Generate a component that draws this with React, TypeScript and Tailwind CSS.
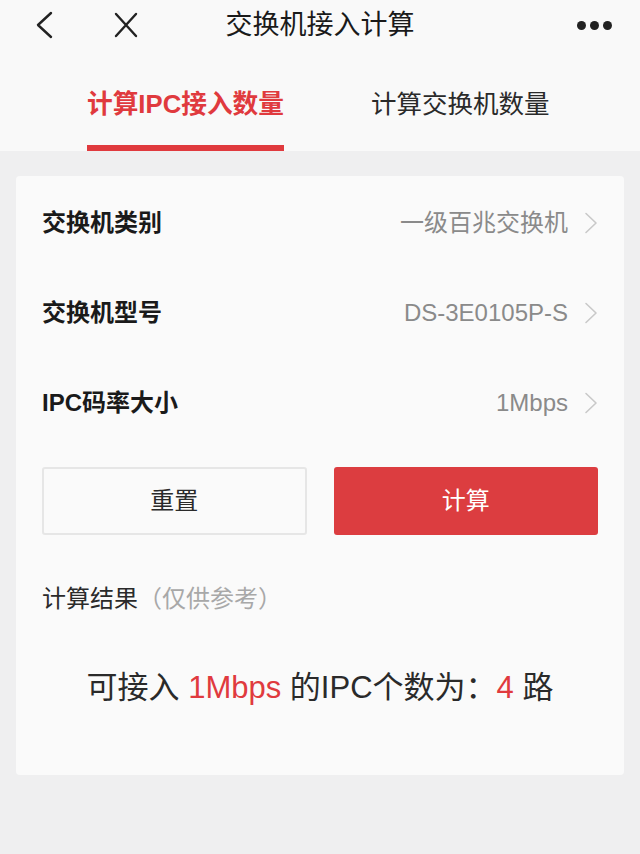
import React from "react";

const FONT = { fontFamily: '"Liberation Sans", "Noto Sans CJK SC", sans-serif' };

function Chevron() {
  return (
    <svg width="14" height="22" viewBox="0 0 14 22" className="ml-[16px] shrink-0">
      <path d="M2 1.5 L12 11 L2 20.5" fill="none" stroke="#c9c9c9" strokeWidth="1.6" strokeLinecap="round" strokeLinejoin="round" />
    </svg>
  );
}

function Row({ label, value }: { label: string; value: string }) {
  return (
    <div className="flex h-[90px] items-center justify-between">
      <div className="text-[24px] font-bold text-[#1a1a1a]">{label}</div>
      <div className="flex items-center">
        <span className="text-[24px] text-[#8a8a8a]">{value}</span>
        <Chevron />
      </div>
    </div>
  );
}

export default function App() {
  return (
    <div className="flex min-h-[854px] w-[640px] flex-col bg-[#efeff0]" style={FONT}>
      <div className="bg-[#f9f9f9]">
        <div className="grid h-[50px] grid-cols-[1fr_auto_1fr] items-center">
          <div className="flex items-center pl-[34px]">
            <svg width="20" height="30" viewBox="0 0 20 30">
              <path d="M17 3 L4 15 L17 27" fill="none" stroke="#222" strokeWidth="2.4" strokeLinecap="round" strokeLinejoin="round" />
            </svg>
            <svg width="26" height="28" viewBox="0 0 26 28" className="ml-[59px]">
              <path d="M3 3 L23 25 M23 3 L3 25" fill="none" stroke="#222" strokeWidth="2.4" strokeLinecap="round" />
            </svg>
          </div>
          <div className="text-[27px] text-[#1a1a1a]">交换机接入计算</div>
          <div className="flex items-center justify-end gap-[4px] pr-[28px]">
            <span className="h-[9px] w-[9px] rounded-full bg-[#222]" />
            <span className="h-[9px] w-[9px] rounded-full bg-[#222]" />
            <span className="h-[9px] w-[9px] rounded-full bg-[#222]" />
          </div>
        </div>
        <div className="flex h-[101px] items-stretch pl-[87px]">
          <div className="flex flex-col">
            <div className="flex flex-1 items-center pt-[14px] text-[25.7px] font-bold text-[#e03a3e]">计算IPC接入数量</div>
            <div className="h-[6px] bg-[#e03a3e]" />
          </div>
          <div className="ml-[87px] flex flex-col">
            <div className="flex flex-1 items-center pt-[14px] text-[25.5px] text-[#2a2a2a]">计算交换机数量</div>
            <div className="h-[6px]" />
          </div>
        </div>
      </div>

      <div className="px-[16px] pt-[25px]">
        <div className="rounded-[4px] bg-[#fafafa] px-[26px] pt-[2px] pb-[67px]">
          <Row label="交换机类别" value="一级百兆交换机" />
          <Row label="交换机型号" value="DS-3E0105P-S" />
          <Row label="IPC码率大小" value="1Mbps" />

          <div className="mt-[19px] grid grid-cols-2 gap-[27px]">
            <button className="flex h-[68px] items-center justify-center rounded-[3px] border-2 border-[#e6e6e6] bg-[#fafafa] text-[24px] text-[#2a2a2a]">
              重置
            </button>
            <button className="flex h-[68px] items-center justify-center rounded-[3px] bg-[#dc3d40] text-[24px] text-white">
              计算
            </button>
          </div>

          <div className="mt-[49px] text-[24px] leading-[30px] text-[#2a2a2a]">
            计算结果<span className="text-[#a8a8a8]">（仅供参考）</span>
          </div>

          <div className="mt-[54px] text-center text-[31px] leading-[40px] text-[#2a2a2a]">
            可接入 <span className="text-[#e03a3e]">1Mbps</span> 的IPC个数为：<span className="text-[#e03a3e]">4</span> 路
          </div>
        </div>
      </div>
    </div>
  );
}
